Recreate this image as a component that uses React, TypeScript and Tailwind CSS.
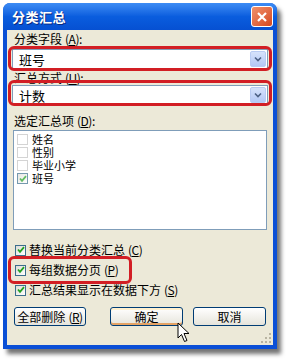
const font = { fontFamily: '"Noto Sans CJK SC", "Liberation Sans", sans-serif' };

function Key({ k }: { k: string }) {
  return (
    <span className="ml-[3px] tracking-[-0.5px]">
      (<span className="underline">{k}</span>)
    </span>
  );
}

function Combo({ value }: { value: string }) {
  return (
    <div className="ml-[5px] w-[256px] h-[20px] bg-white border border-[#7F9DB9] flex items-center justify-between">
      <span className="pl-[6px] text-[13px] leading-none">{value}</span>
      <div className="mr-[1px] w-[16px] h-[16px] rounded-[2px] bg-gradient-to-b from-[#D6E2FB] to-[#B4C8F5] border border-[#B9CBF3] flex items-center justify-center">
        <svg width="8" height="6" viewBox="0 0 8 6">
          <path d="M1 1.5 L4 4.5 L7 1.5" fill="none" stroke="#4D6185" strokeWidth="1.6" />
        </svg>
      </div>
    </div>
  );
}

function Check({ on }: { on: boolean }) {
  return (
    <div
      className={
        on
          ? 'w-[11px] h-[11px] border border-[#3C6E8C] bg-gradient-to-br from-[#DCDCD6] to-white flex items-center justify-center'
          : 'w-[11px] h-[11px] border border-[#B8B8B8] bg-white'
      }
    >
      {on && (
        <svg width="8" height="8" viewBox="0 0 8 8">
          <path d="M1 3.5 L3 5.8 L7 1.2" fill="none" stroke="#21A121" strokeWidth="1.8" />
        </svg>
      )}
    </div>
  );
}

function ListItem({ label, on }: { label: string; on?: boolean }) {
  return (
    <div className="flex items-center h-[13px] gap-[4px]">
      <div className={on ? 'opacity-70' : 'opacity-60'}>
        <Check on={!!on} />
      </div>
      <span className="text-[11px] leading-[11px]">{label}</span>
    </div>
  );
}

function Option({ label, k }: { label: string; k: string }) {
  return (
    <div className="flex items-center h-[20px] gap-[3px] ml-[8px]">
      <Check on />
      <span className="text-[12px] leading-none">
        {label}
        <Key k={k} />
      </span>
    </div>
  );
}

function Btn({ children, def }: { children: React.ReactNode; def?: boolean }) {
  return (
    <div
      className={
        'h-[19px] rounded-[3px] border border-[#003C74] bg-gradient-to-b from-white to-[#E6E4DB] flex items-center justify-center text-[12px] leading-none ' +
        (def ? 'shadow-[inset_0_-2px_0_#E5A365,inset_0_2px_0_#FFF0CF]' : '')
      }
    >
      {children}
    </div>
  );
}

export default function App() {
  return (
    <div className="w-[292px] h-[362px] bg-white pt-[3px] pl-[3px] overflow-hidden" style={font}>
      <div className="w-[274px] h-[346px] rounded-t-[7px] bg-[#0A4FD6] flex flex-col shadow-[4px_5px_4px_rgba(0,0,0,0.55)]">
        {/* title bar */}
        <div className="h-[27px] rounded-t-[7px] bg-gradient-to-b from-[#3D8CF4] via-[#0A5DDE] to-[#0650D2] flex items-center justify-between pl-[9px] pr-[4px]">
          <span className="text-white text-[13px] font-bold tracking-[0.5px] [text-shadow:1px_1px_0_#0A2A80]">分类汇总</span>
          <div className="w-[22px] h-[21px] rounded-[3px] border border-white bg-gradient-to-br from-[#F0906A] to-[#D4461C] flex items-center justify-center">
            <svg width="12" height="12" viewBox="0 0 12 12">
              <path d="M2 2 L10 10 M10 2 L2 10" stroke="white" strokeWidth="2.2" />
            </svg>
          </div>
        </div>

        {/* body */}
        <div className="relative flex-1 mx-[4px] mb-[4px] bg-[#ECE9D8] text-black flex flex-col">
          <div className="pt-[2px] pl-[7px] text-[12px] leading-[14px]">
            分类字段<Key k="A" />:
          </div>
          <div className="mt-[3px]">
            <Combo value="班号" />
          </div>
          <div className="mt-[2px] pl-[7px] text-[12px] leading-[14px]">
            汇总方式<Key k="U" />:
          </div>
          <div className="mt-[0px]">
            <Combo value="计数" />
          </div>
          <div className="mt-[9px] pl-[7px] text-[12px] leading-[14px]">
            选定汇总项<Key k="D" />:
          </div>
          <div className="mt-[2px] ml-[6px] w-[254px] h-[100px] bg-white border border-[#7F9DB9] pt-[2px] pl-[3px]">
            <ListItem label="姓名" />
            <ListItem label="性别" />
            <ListItem label="毕业小学" />
            <ListItem label="班号" on />
          </div>
          <div className="mt-[10px]">
            <Option label="替换当前分类汇总" k="C" />
            <Option label="每组数据分页" k="P" />
            <Option label="汇总结果显示在数据下方" k="S" />
          </div>
          <div className="mt-[7px] flex items-center pl-[7px]">
            <div className="w-[72px]">
              <Btn>
                全部删除
                <Key k="R" />
              </Btn>
            </div>
            <div className="w-[73px] ml-[24px]">
              <Btn def>确定</Btn>
            </div>
            <div className="w-[73px] ml-[10px]">
              <Btn>取消</Btn>
            </div>
          </div>

          {/* size grip */}
          <svg className="absolute right-[2px] bottom-[2px]" width="11" height="11" viewBox="0 0 11 11">
            {[
              [9, 1], [9, 5], [5, 5], [9, 9], [5, 9], [1, 9],
            ].map(([x, y], i) => (
              <rect key={i} x={x} y={y} width="2" height="2" fill="#B8B4A2" />
            ))}
          </svg>

          {/* red highlight outlines */}
          <div className="absolute left-[1px] top-[16px] w-[264px] h-[25px] rounded-[6px] border-[3px] border-[#D21E24]" />
          <div className="absolute left-[1px] top-[50px] w-[264px] h-[26px] rounded-[6px] border-[3px] border-[#D21E24]" />
          <div className="absolute left-[1px] top-[226px] w-[124px] h-[28px] rounded-[6px] border-[3px] border-[#D21E24]" />

          {/* mouse cursor */}
          <svg className="absolute left-[170px] top-[292px]" width="14" height="22" viewBox="0 0 14 22">
            <path
              d="M1 1 L1 16 L4.5 12.5 L7.5 19.5 L10 18.5 L7 11.5 L12 11.5 Z"
              fill="white"
              stroke="black"
              strokeWidth="1"
              strokeLinejoin="round"
            />
          </svg>
        </div>
      </div>
    </div>
  );
}
